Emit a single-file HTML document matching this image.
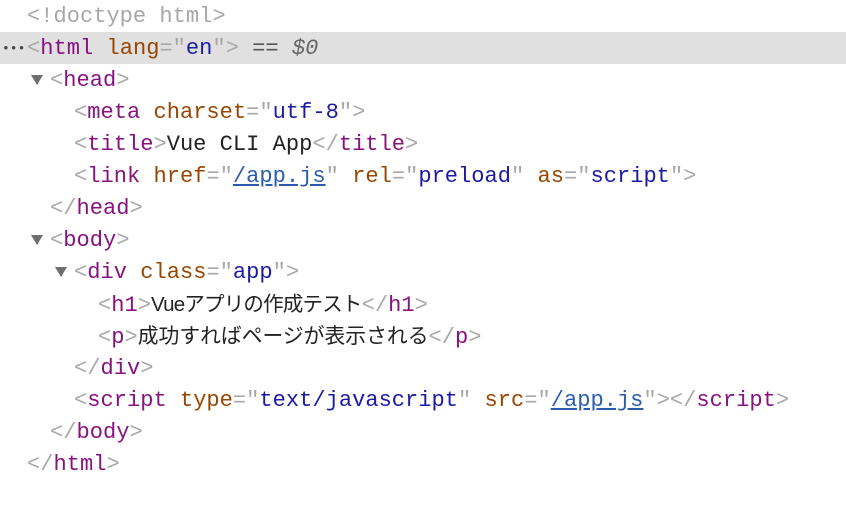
<!DOCTYPE html>
<html><head><style>
body{margin:0;width:846px;height:524px;background:#fff;overflow:hidden;font-family:"Liberation Mono",monospace;font-size:22.07px;}
.l{position:absolute;left:0;height:32px;line-height:33px;white-space:pre;width:846px;}
.g{color:#a8a8a8}.t{color:#881280}.a{color:#994500}.v{color:#1a1aa6}.x{color:#222}
.u{color:#2a5db0;text-decoration:underline}
.j{font-family:"Liberation Sans","Noto Sans CJK JP",sans-serif;color:#222;font-size:20.5px}
.tri{position:absolute;width:0;height:0;border-left:6px solid transparent;border-right:6px solid transparent;border-top:10px solid #6e6e6e;top:11px}
.s{position:absolute;top:0}
</style></head><body>
<div class="l" style="top:0"><span class="s g" style="left:27px">&lt;!doctype html&gt;</span></div>
<div class="l" style="top:32px;background:#e0e0e0"><span class="s" style="left:2px;color:#444;font-size:13px">•••</span><span class="s" style="left:27px"><span class="g">&lt;</span><span class="t">html</span> <span class="a">lang</span><span class="g">="</span><span class="v">en</span><span class="g">"&gt;</span> <span style="color:#555">==</span> <i style="color:#666">$0</i></span></div>
<div class="l" style="top:64px"><div class="tri" style="left:31px"></div><span class="s" style="left:50px"><span class="g">&lt;</span><span class="t">head</span><span class="g">&gt;</span></span></div>
<div class="l" style="top:96px"><span class="s" style="left:74px"><span class="g">&lt;</span><span class="t">meta</span> <span class="a">charset</span><span class="g">="</span><span class="v">utf-8</span><span class="g">"&gt;</span></span></div>
<div class="l" style="top:128px"><span class="s" style="left:74px"><span class="g">&lt;</span><span class="t">title</span><span class="g">&gt;</span><span class="x">Vue CLI App</span><span class="g">&lt;/</span><span class="t">title</span><span class="g">&gt;</span></span></div>
<div class="l" style="top:160px"><span class="s" style="left:74px"><span class="g">&lt;</span><span class="t">link</span> <span class="a">href</span><span class="g">="</span><span class="u">/app.js</span><span class="g">"</span> <span class="a">rel</span><span class="g">="</span><span class="v">preload</span><span class="g">"</span> <span class="a">as</span><span class="g">="</span><span class="v">script</span><span class="g">"&gt;</span></span></div>
<div class="l" style="top:192px"><span class="s" style="left:50px"><span class="g">&lt;/</span><span class="t">head</span><span class="g">&gt;</span></span></div>
<div class="l" style="top:224px"><div class="tri" style="left:31px"></div><span class="s" style="left:50px"><span class="g">&lt;</span><span class="t">body</span><span class="g">&gt;</span></span></div>
<div class="l" style="top:256px"><div class="tri" style="left:55px"></div><span class="s" style="left:74px"><span class="g">&lt;</span><span class="t">div</span> <span class="a">class</span><span class="g">="</span><span class="v">app</span><span class="g">"&gt;</span></span></div>
<div class="l" style="top:288px"><span class="s" style="left:98px"><span class="g">&lt;</span><span class="t">h1</span><span class="g">&gt;</span><span class="j" style="letter-spacing:-0.8px">Vueアプリの作成テスト</span><span class="g">&lt;/</span><span class="t">h1</span><span class="g">&gt;</span></span></div>
<div class="l" style="top:320px"><span class="s" style="left:98px"><span class="g">&lt;</span><span class="t">p</span><span class="g">&gt;</span><span class="j" style="font-size:20.8px">成功すればページが表示される</span><span class="g">&lt;/</span><span class="t">p</span><span class="g">&gt;</span></span></div>
<div class="l" style="top:352px"><span class="s" style="left:74px"><span class="g">&lt;/</span><span class="t">div</span><span class="g">&gt;</span></span></div>
<div class="l" style="top:384px"><span class="s" style="left:74px"><span class="g">&lt;</span><span class="t">script</span> <span class="a">type</span><span class="g">="</span><span class="v">text/javascript</span><span class="g">"</span> <span class="a">src</span><span class="g">="</span><span class="u">/app.js</span><span class="g">"&gt;&lt;/</span><span class="t">script</span><span class="g">&gt;</span></span></div>
<div class="l" style="top:416px"><span class="s" style="left:50px"><span class="g">&lt;/</span><span class="t">body</span><span class="g">&gt;</span></span></div>
<div class="l" style="top:448px"><span class="s" style="left:27px"><span class="g">&lt;/</span><span class="t">html</span><span class="g">&gt;</span></span></div>
</body></html>
